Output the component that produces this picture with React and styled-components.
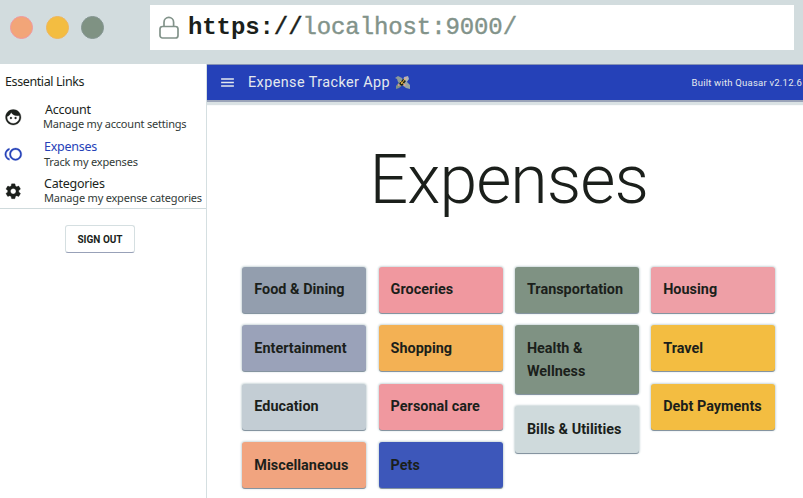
import React from 'react';
import styled, { createGlobalStyle } from 'styled-components';
import { MdFace, MdToll, MdSettings, MdMenu } from 'react-icons/md';

const GlobalStyle = createGlobalStyle`
  * { box-sizing: border-box; }
  body { margin: 0; background: #fff; color: #1b1f1b; overflow: hidden; font-family: Roboto, sans-serif; }
  h1, p { margin: 0; }
`;

const Window = styled.div`
  width: 803px;
  height: 498px;
  display: flex;
  flex-direction: column;
  overflow: hidden;
`;

const BrowserBar = styled.header`
  height: 64px;
  flex: none;
  display: flex;
  padding: 5px 9px 0 10px;
  background: #d2dcde;
`;

const Lights = styled.div`
  width: 140px;
  height: 44px;
  display: flex;
  align-items: center;
  gap: 12.5px;
`;

const Light = styled.span`
  width: 23px;
  height: 23px;
  border-radius: 50%;
  background: ${(p) => p.$fill};
  border: 1px solid ${(p) => p.$edge};
`;

const AddressBar = styled.div`
  flex: 1;
  height: 45px;
  display: flex;
  align-items: center;
  padding-left: 8px;
  background: #fff;
`;

const Url = styled.div`
  margin-left: 8px;
  padding-top: 1px;
  font: 24px/28px 'Courier New', 'Liberation Mono', monospace;
  letter-spacing: -0.1px;
  color: #82938a;
  -webkit-text-stroke: 0.4px currentColor;
  white-space: pre;
`;

const Scheme = styled.span`
  color: #1b1f1b;
  font-weight: ${(p) => (p.$bold ? 700 : 400)};
  -webkit-text-stroke-width: ${(p) => (p.$bold ? 0 : 0.5)}px;
`;

const Body = styled.div`
  flex: 1;
  display: flex;
  min-height: 0;
`;

const Sidebar = styled.aside`
  width: 207px;
  flex: none;
  border-right: 1px solid #d5dfe1;
  font-family: 'Noto Sans', sans-serif;
`;

const Links = styled.nav`
  height: 145px;
  border-bottom: 1px solid #cfdadc;
  padding-top: 9px;
`;

const LinksTitle = styled.div`
  height: 29px;
  padding-left: 5px;
  font-size: 12.5px;
  line-height: 18px;
  letter-spacing: -0.4px;
`;

const LinkRow = styled.a`
  height: 37px;
  display: flex;
  padding-left: 4px;
  color: ${(p) => (p.$active ? '#2541b8' : '#1b1f1b')};
`;

const LinkIcon = styled.span`
  width: ${(p) => p.$width}px;
  padding-top: 6px;
  flex: none;
  font-size: 18.5px;
  line-height: 0;

  svg { stroke: none; }
  path:not([fill='none']) { stroke: currentColor; stroke-width: 0.4px; }
`;

const LinkName = styled.div`
  padding-left: ${(p) => p.$indent || 0}px;
  font-size: 12.5px;
  line-height: 15px;
  letter-spacing: -0.25px;
`;

const LinkCaption = styled.p`
  color: #323a37;
  font-size: 11px;
  line-height: ${(p) => p.$leading}px;
  letter-spacing: -0.2px;
  white-space: nowrap;
`;

const SignOut = styled.button`
  display: block;
  width: 70px;
  height: 28px;
  margin: 16px 0 0 65px;
  padding: 0;
  border: 1px solid #d5dfe1;
  border-bottom: 1px solid #98a1b8;
  border-radius: 3px;
  background: #fff;
  color: #1b1f1b;
  font: 700 10px/27px Roboto, sans-serif;
`;

const Main = styled.main`
  flex: 1;
  min-width: 0;
`;

const Toolbar = styled.div`
  height: 36px;
  display: flex;
  align-items: center;
  padding-left: 12px;
  border-top: 1px solid #8793b4;
  background: #2541b8;
  box-shadow: 0 2px 0 #9ba4b8, 0 5px 1px #dae2e4;
  color: #e4e9ee;
  white-space: nowrap;
`;

const ToolbarTitle = styled.div`
  margin: 0 4px 0 12px;
  font-size: 14.4px;
  line-height: 20px;
  letter-spacing: 0.42px;
`;

const Version = styled.div`
  margin-left: auto;
  margin-right: 1px;
  font-size: 9.5px;
  letter-spacing: 0.22px;
`;

const PageTitle = styled.h1`
  padding-top: 38px;
  margin-left: 162.5px;
  font-weight: 300;
  font-size: 68px;
  line-height: 84px;
  letter-spacing: -0.95px;
  white-space: nowrap;
`;

const Board = styled.div`
  display: grid;
  grid-template-columns: repeat(4, 124px);
  column-gap: 12.3px;
  margin: 44.6px 0 0 35.3px;
`;

const Column = styled.div`
  display: flex;
  flex-direction: column;
  gap: 12.1px;
`;

const Card = styled.div`
  padding: 12.8px 12px 10.900px;
  border-radius: 3px;
  background: ${(p) => p.$color};
  box-shadow: 0 1px 0 #8594a0, 0 0 2px 1px #cfdadc;
  font-weight: 700;
  font-size: 14.4px;
  line-height: 22.7px;
  letter-spacing: 0.02px;
`;

const columns = [
  [['Food & Dining', '#939eae'], ['Entertainment', '#9aa2b9'], ['Education', '#c3cdd4'], ['Miscellaneous', '#f1a47f']],
  [['Groceries', '#f0989f'], ['Shopping', '#f3b154'], ['Personal care', '#f0989f'], ['Pets', '#3d57ba']],
  [['Transportation', '#7f9283'], ['Health & Wellness', '#7f9283'], ['Bills & Utilities', '#cfdadc']],
  [['Housing', '#ee9fa6'], ['Travel', '#f3bd41'], ['Debt Payments', '#f3bd41']],
];

const links = [
  { name: 'Account', caption: 'Manage my account settings', Icon: MdFace, width: 39, indent: 2, leading: 14 },
  { name: 'Expenses', caption: 'Track my expenses', Icon: MdToll, width: 40, leading: 15, active: true },
  { name: 'Categories', caption: 'Manage my expense categories', Icon: MdSettings, width: 40, leading: 13 },
];

function Lock() {
  return (
    <svg width="22" height="24" viewBox="0 0 22 24" fill="none" stroke="#82938a" strokeWidth="1.7">
      <rect x="2" y="10.5" width="18" height="11.5" rx="2.5" />
      <path d="M6 10.5V6.200a4.800 4.800 0 0 1 9.600 0v4.300" />
    </svg>
  );
}

function WingedMoney() {
  return (
    <svg width="17" height="16" viewBox="0 0 17 16">
      <path d="M1 3 4 1l4 2 2 4-3 2-3-2-1-3z" fill="#8d9a98" />
      <path d="m10 2 4-1 1 3-3 4-3-2z" fill="#aab5b5" />
      <path d="m8 7 4-1 4 4v4l-4-1-4-3z" fill="#98a5a4" />
      <path d="m2 11 4-5 4 3-5 4-3 1z" fill="#7f9283" />
      <path d="m5 9 4-5 3 2-4 5z" fill="#1b1f1b" />
      <path d="m7 9 4-5M6 6l5 4" stroke="#f3bd41" strokeWidth="1" />
      <path d="M11 3h1.500M4 10h1.500M10 10h1.500" stroke="#f0989f" strokeWidth="1.300" />
    </svg>
  );
}

export default function App() {
  return (
    <Window>
      <GlobalStyle />
      <BrowserBar>
        <Lights>
          <Light $fill="#f2a578" $edge="#f0989f" />
          <Light $fill="#f3bd41" $edge="#f0b65c" />
          <Light $fill="#7f9283" $edge="#849591" />
        </Lights>
        <AddressBar>
          <Lock />
          <Url>
            <Scheme $bold>https:</Scheme>
            <Scheme>//</Scheme>
            localhost:9000/
          </Url>
        </AddressBar>
      </BrowserBar>
      <Body>
        <Sidebar>
          <Links>
            <LinksTitle>Essential Links</LinksTitle>
            {links.map(({ name, caption, Icon, width, indent, leading, active }) => (
              <LinkRow key={name} $active={active}>
                <LinkIcon $width={width}><Icon /></LinkIcon>
                <div>
                  <LinkName $indent={indent}>{name}</LinkName>
                  <LinkCaption $leading={leading}>{caption}</LinkCaption>
                </div>
              </LinkRow>
            ))}
          </Links>
          <SignOut>SIGN OUT</SignOut>
        </Sidebar>
        <Main>
          <Toolbar>
            <MdMenu size={17} />
            <ToolbarTitle>Expense Tracker App</ToolbarTitle>
            <WingedMoney />
            <Version>Built with Quasar v2.12.6</Version>
          </Toolbar>
          <PageTitle>Expenses</PageTitle>
          <Board>
            {columns.map((cards, i) => (
              <Column key={i}>
                {cards.map(([label, color]) => <Card key={label} $color={color}>{label}</Card>)}
              </Column>
            ))}
          </Board>
        </Main>
      </Body>
    </Window>
  );
}
